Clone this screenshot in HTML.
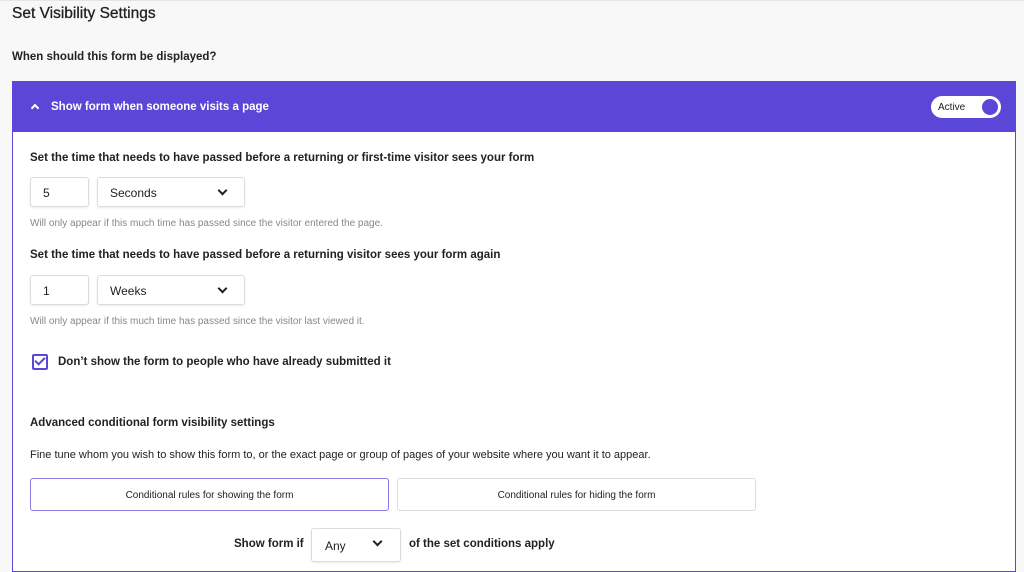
<!DOCTYPE html>
<html><head><style>
body{margin:0;width:1024px;height:556px;overflow:hidden;background:#f8f8f8;font-family:"Liberation Sans",sans-serif;color:#1e1e1e;position:relative}
.a{position:absolute;white-space:nowrap}
.panel{position:absolute;left:12px;top:81px;width:1002px;height:490px;background:#fff;border:1px solid #5b48d8;border-top:none}
.hdr{position:absolute;left:12px;top:81px;width:1004px;height:51px;background:#5a47d7}
.box{position:absolute;background:#fff;border:1px solid #dcdcde;border-radius:3px;box-shadow:0 1px 2px rgba(0,0,0,.08);font-size:12px;box-sizing:border-box}
.chev{position:absolute;width:5px;height:5px;border-right:2px solid #222;border-bottom:2px solid #222;transform:rotate(45deg)}
.lbl{font-size:11.5px;font-weight:bold;color:#222}
.hint{font-size:10px;color:#888}
</style></head><body>
<div style="position:absolute;left:0;top:0;width:1024px;height:1px;background:#e5e5e5"></div>
<div class="a" style="left:12px;top:5px;font-size:15.5px;color:#222;-webkit-text-stroke:0.3px #222">Set Visibility Settings</div>
<div class="a lbl" style="left:12px;top:51px">When should this form be displayed?</div>
<div class="panel"></div>
<div class="hdr"></div>
<div class="a" style="left:32px;top:105px;width:4px;height:4px;border-left:2px solid #fff;border-top:2px solid #fff;transform:rotate(45deg)"></div>
<div class="a" style="left:51px;top:101px;font-size:11.5px;color:#fff;font-weight:bold">Show form when someone visits a page</div>
<div class="a" style="left:931px;top:96px;width:70px;height:22px;background:#fff;border-radius:11px"></div>
<div class="a" style="left:938px;top:102px;font-size:10px;color:#222">Active</div>
<div class="a" style="left:982px;top:99px;width:16px;height:16px;background:#5a47d7;border-radius:50%"></div>

<div class="a lbl" style="left:30px;top:152px">Set the time that needs to have passed before a returning or first-time visitor sees your form</div>
<div class="box" style="left:30px;top:177px;width:59px;height:30px;padding:8px 12px">5</div>
<div class="box" style="left:97px;top:177px;width:148px;height:30px;padding:8px 12px">Seconds</div>
<div class="chev" style="left:219px;top:187px"></div>
<div class="a hint" style="left:30px;top:218px">Will only appear if this much time has passed since the visitor entered the page.</div>

<div class="a lbl" style="left:30px;top:249px">Set the time that needs to have passed before a returning visitor sees your form again</div>
<div class="box" style="left:30px;top:275px;width:59px;height:30px;padding:8px 12px">1</div>
<div class="box" style="left:97px;top:275px;width:148px;height:30px;padding:8px 12px">Weeks</div>
<div class="chev" style="left:219px;top:285px"></div>
<div class="a hint" style="left:30px;top:316px">Will only appear if this much time has passed since the visitor last viewed it.</div>

<div class="a" style="left:32px;top:354px;width:12px;height:12px;border:2px solid #5a47d7;border-radius:2px"></div>
<div class="a" style="left:37px;top:355px;width:4px;height:8px;border-right:2px solid #5a47d7;border-bottom:2px solid #5a47d7;transform:rotate(45deg)"></div>
<div class="a lbl" style="left:58px;top:356px">Don’t show the form to people who have already submitted it</div>

<div class="a lbl" style="left:30px;top:417px">Advanced conditional form visibility settings</div>
<div class="a" style="left:30px;top:449px;font-size:11px;color:#222">Fine tune whom you wish to show this form to, or the exact page or group of pages of your website where you want it to appear.</div>
<div class="box" style="left:30px;top:478px;width:359px;height:33px;border-color:#8a7ee6;text-align:center;line-height:33px;font-size:10px;box-shadow:none">Conditional rules for showing the form</div>
<div class="box" style="left:397px;top:478px;width:359px;height:33px;text-align:center;line-height:33px;font-size:10px;box-shadow:none">Conditional rules for hiding the form</div>
<div class="a lbl" style="left:234px;top:538px">Show form if</div>
<div class="box" style="left:311px;top:528px;width:90px;height:34px;padding:10px 13px;border-radius:3px">Any</div>
<div class="chev" style="left:374px;top:538px"></div>
<div class="a lbl" style="left:409px;top:538px">of the set conditions apply</div>
</body></html>
